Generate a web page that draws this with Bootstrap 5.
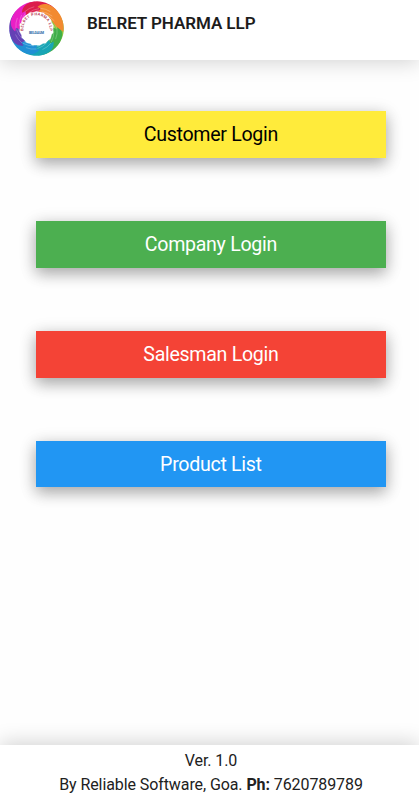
<!DOCTYPE html>
<html lang="en">
<head>
<meta charset="utf-8">
<meta name="viewport" content="width=device-width, initial-scale=1">
<title>Belret Pharma LLP</title>
<link href="https://cdn.jsdelivr.net/npm/bootstrap@5.3.0/dist/css/bootstrap.min.css" rel="stylesheet">
<style>
body{font-family:Roboto,sans-serif;color:#212121;background:#fefefe;letter-spacing:0}
.app-bar{height:59.5px;padding-left:8px;box-shadow:0 3px 20px rgba(0,0,0,.17)}
.app-logo{width:57px;height:57px}
.app-name{font-size:17px;font-weight:600;line-height:24px;margin:11px 0 0 22px;letter-spacing:-.06px;color:#1c1c1c}
.menu-list{padding:51.7px 33.5px 0 36.3px;gap:63px}
.menu-btn{height:46.8px;font-size:19.6px;letter-spacing:-.3px;line-height:47.8px;padding:0;border:0;border-radius:0;box-shadow:0 6px 14px rgba(0,0,0,.24),0 3px 18px rgba(0,0,0,.16)}
.tone-yellow,.tone-yellow:hover{background:#ffeb3b;color:#000}
.tone-green,.tone-green:hover{background:#4caf50;color:#fff}
.tone-red,.tone-red:hover{background:#f44336;color:#fff}
.tone-blue,.tone-blue:hover{background:#2196f3;color:#fff}
.app-foot{height:55px;padding-top:4px;padding-left:3px;font-size:16px;line-height:23.6px;letter-spacing:-.09px;box-shadow:0 -3px 20px rgba(0,0,0,.17)}
.app-foot strong{font-weight:700}
</style>
<script src="https://cdn.jsdelivr.net/npm/bootstrap@5.3.0/dist/js/bootstrap.bundle.min.js"></script>
</head>
<body class="d-flex flex-column vh-100 overflow-hidden">
<header class="app-bar bg-white d-flex align-items-start flex-shrink-0">
<svg class="app-logo flex-shrink-0" viewBox="-28.5 -28.5 57 57" role="img" aria-label="Belret logo">
<defs>
<path id="arm" d="M18-20C10-28-2-29-10-25C-15-23-18-18-17-13L-14-15L-12.5-11.5L-9-15L-6.5-15L-3-17L1.4-17L10-17.3Z"/>
<path id="fingers" d="M-14.5-14.5Q-11-19-6-21M-10.5-14Q-7-18-1-20M-7-15Q-3-18 4-19" fill="none" stroke="#fff" stroke-width=".6" stroke-opacity=".38"/>
<path id="ring-text" d="M-12.1 5A13.1 13.1 0 1 1 12.1 5"/>
</defs>
<g transform="rotate(90)"><use href="#arm" fill="#8cc63f"/><use href="#fingers"/></g>
<g transform="rotate(135)"><use href="#arm" fill="#3fae49"/><use href="#fingers"/></g>
<g transform="rotate(180)"><use href="#arm" fill="#18a5b5"/><use href="#fingers"/></g>
<g transform="rotate(225)"><use href="#arm" fill="#2090d4"/><use href="#fingers"/></g>
<g transform="rotate(270)"><use href="#arm" fill="#6541b5"/><use href="#fingers"/></g>
<g transform="rotate(315)"><use href="#arm" fill="#ea1fc6"/><use href="#fingers"/></g>
<g transform="rotate(10)"><use href="#arm" fill="#dc1c4b"/><use href="#fingers"/></g>
<g transform="rotate(55)"><use href="#arm" fill="#f28a30"/><use href="#fingers"/></g>
<text font-size="3.9" font-weight="700" fill="#b8465a"><textPath href="#ring-text" startOffset="50%" text-anchor="middle" textLength="45">BELRET PHARMA LLP</textPath></text>
<text x="0" y="5.8" font-size="3.4" font-weight="700" fill="#2468a5" text-anchor="middle" textLength="15">BELGAUM</text>
</svg>
<h1 class="app-name">BELRET PHARMA LLP</h1>
</header>
<main class="menu-list d-flex flex-column flex-grow-1">
<button type="button" class="btn menu-btn tone-yellow w-100">Customer Login</button>
<button type="button" class="btn menu-btn tone-green w-100">Company Login</button>
<button type="button" class="btn menu-btn tone-red w-100">Salesman Login</button>
<button type="button" class="btn menu-btn tone-blue w-100">Product List</button>
</main>
<footer class="app-foot bg-white text-center flex-shrink-0">
<div>Ver. 1.0</div>
<div>By Reliable Software, Goa. <strong>Ph:</strong> 7620789789</div>
</footer>
</body>
</html>
